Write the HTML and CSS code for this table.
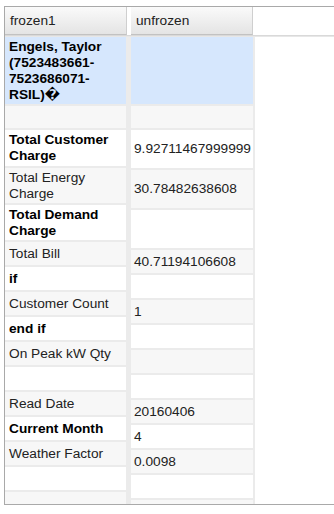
FILE: index.html
```html
<!DOCTYPE html>
<html lang="en">
<head>
    <meta charset="UTF-8">
    <meta name="viewport" content="width=device-width, initial-scale=1.0">
    <title>Bill Grid</title>
    <link rel="stylesheet" href="styles.css">
</head>
<body>
    <div class="grid">
        <div class="head">
            <div class="hcell">frozen1</div>
            <div class="hcell">unfrozen</div>
        </div>
        <div class="shade"></div>

        <div class="body">
            <!-- frozen column -->
            <div class="col frozen">
                <div class="cell sel tall b">Engels, Taylor (7523483661-7523686071-RSIL)&#xFFFD;</div>
                <div class="cell short"></div>
                <div class="cell wrap1 b">Total Customer Charge</div>
                <div class="cell wrap2">Total Energy Charge</div>
                <div class="cell wrap2 b">Total Demand Charge</div>
                <div class="cell">Total Bill</div>
                <div class="cell b">if</div>
                <div class="cell">Customer Count</div>
                <div class="cell b">end if</div>
                <div class="cell">On Peak kW Qty</div>
                <div class="cell"></div>
                <div class="cell">Read Date</div>
                <div class="cell b">Current Month</div>
                <div class="cell">Weather Factor</div>
                <div class="cell"></div>
                <div class="cell"></div>
            </div>

            <!-- scrolling column -->
            <div class="col free">
                <div class="cell sel tall"></div>
                <div class="cell short"></div>
                <div class="cell wide">9.92711467999999</div>
                <div class="cell wide">30.78482638608</div>
                <div class="cell wide"></div>
                <div class="cell">40.71194106608</div>
                <div class="cell"></div>
                <div class="cell">1</div>
                <div class="cell"></div>
                <div class="cell"></div>
                <div class="cell"></div>
                <div class="cell">20160406</div>
                <div class="cell">4</div>
                <div class="cell">0.0098</div>
                <div class="cell"></div>
                <div class="cell"></div>
            </div>
        </div>
    </div>
</body>
</html>
```

FILE: styles.css
```css
* { box-sizing: border-box; }
html, body { overflow: hidden; }
body { margin: 0; font-family: "Liberation Sans", Arial, "DejaVu Sans", sans-serif; font-size: 13.7px; color: #222; background: #fff; }

.grid { margin: 6px 0 0 4px; width: 340px; height: 499px; border: 1px solid #a9a9a9; border-right: 0; overflow: hidden; }

.head { display: flex; height: 28px; background: #fff; }
.hcell { width: 122px; height: 28px; margin-right: 4px; padding-left: 5px; line-height: 27px; background: linear-gradient(#fafafa, #e4e4e4); border-right: 1px solid #cfcfcf; border-bottom: 1px solid #c2c2c2; }
.shade { height: 2px; background: linear-gradient(#d2d2d2, #eeeeee); }

.body { display: flex; align-items: flex-start; }
.col { display: flex; flex-direction: column; }
.frozen { width: 126px; }
.free { width: 124px; }

.cell { display: flex; align-items: center; height: 25px; padding: 0 4px; line-height: 16px; border-bottom: 2px solid #ebebeb; border-right: 2px solid #ebebeb; background: #fff; }
.col .cell:nth-child(even) { background: #f7f7f7; }
.frozen .cell { border-right-width: 5px; }
.free .cell { padding-left: 3px; }

.cell.sel { background: #d6e7fd; }
.tall { height: 69px; }
.short { height: 24px; }
.wrap1 { height: 38px; }
.wrap2 { height: 37px; }
.wide { height: 40px; }
.b { font-weight: bold; color: #000; }
```
